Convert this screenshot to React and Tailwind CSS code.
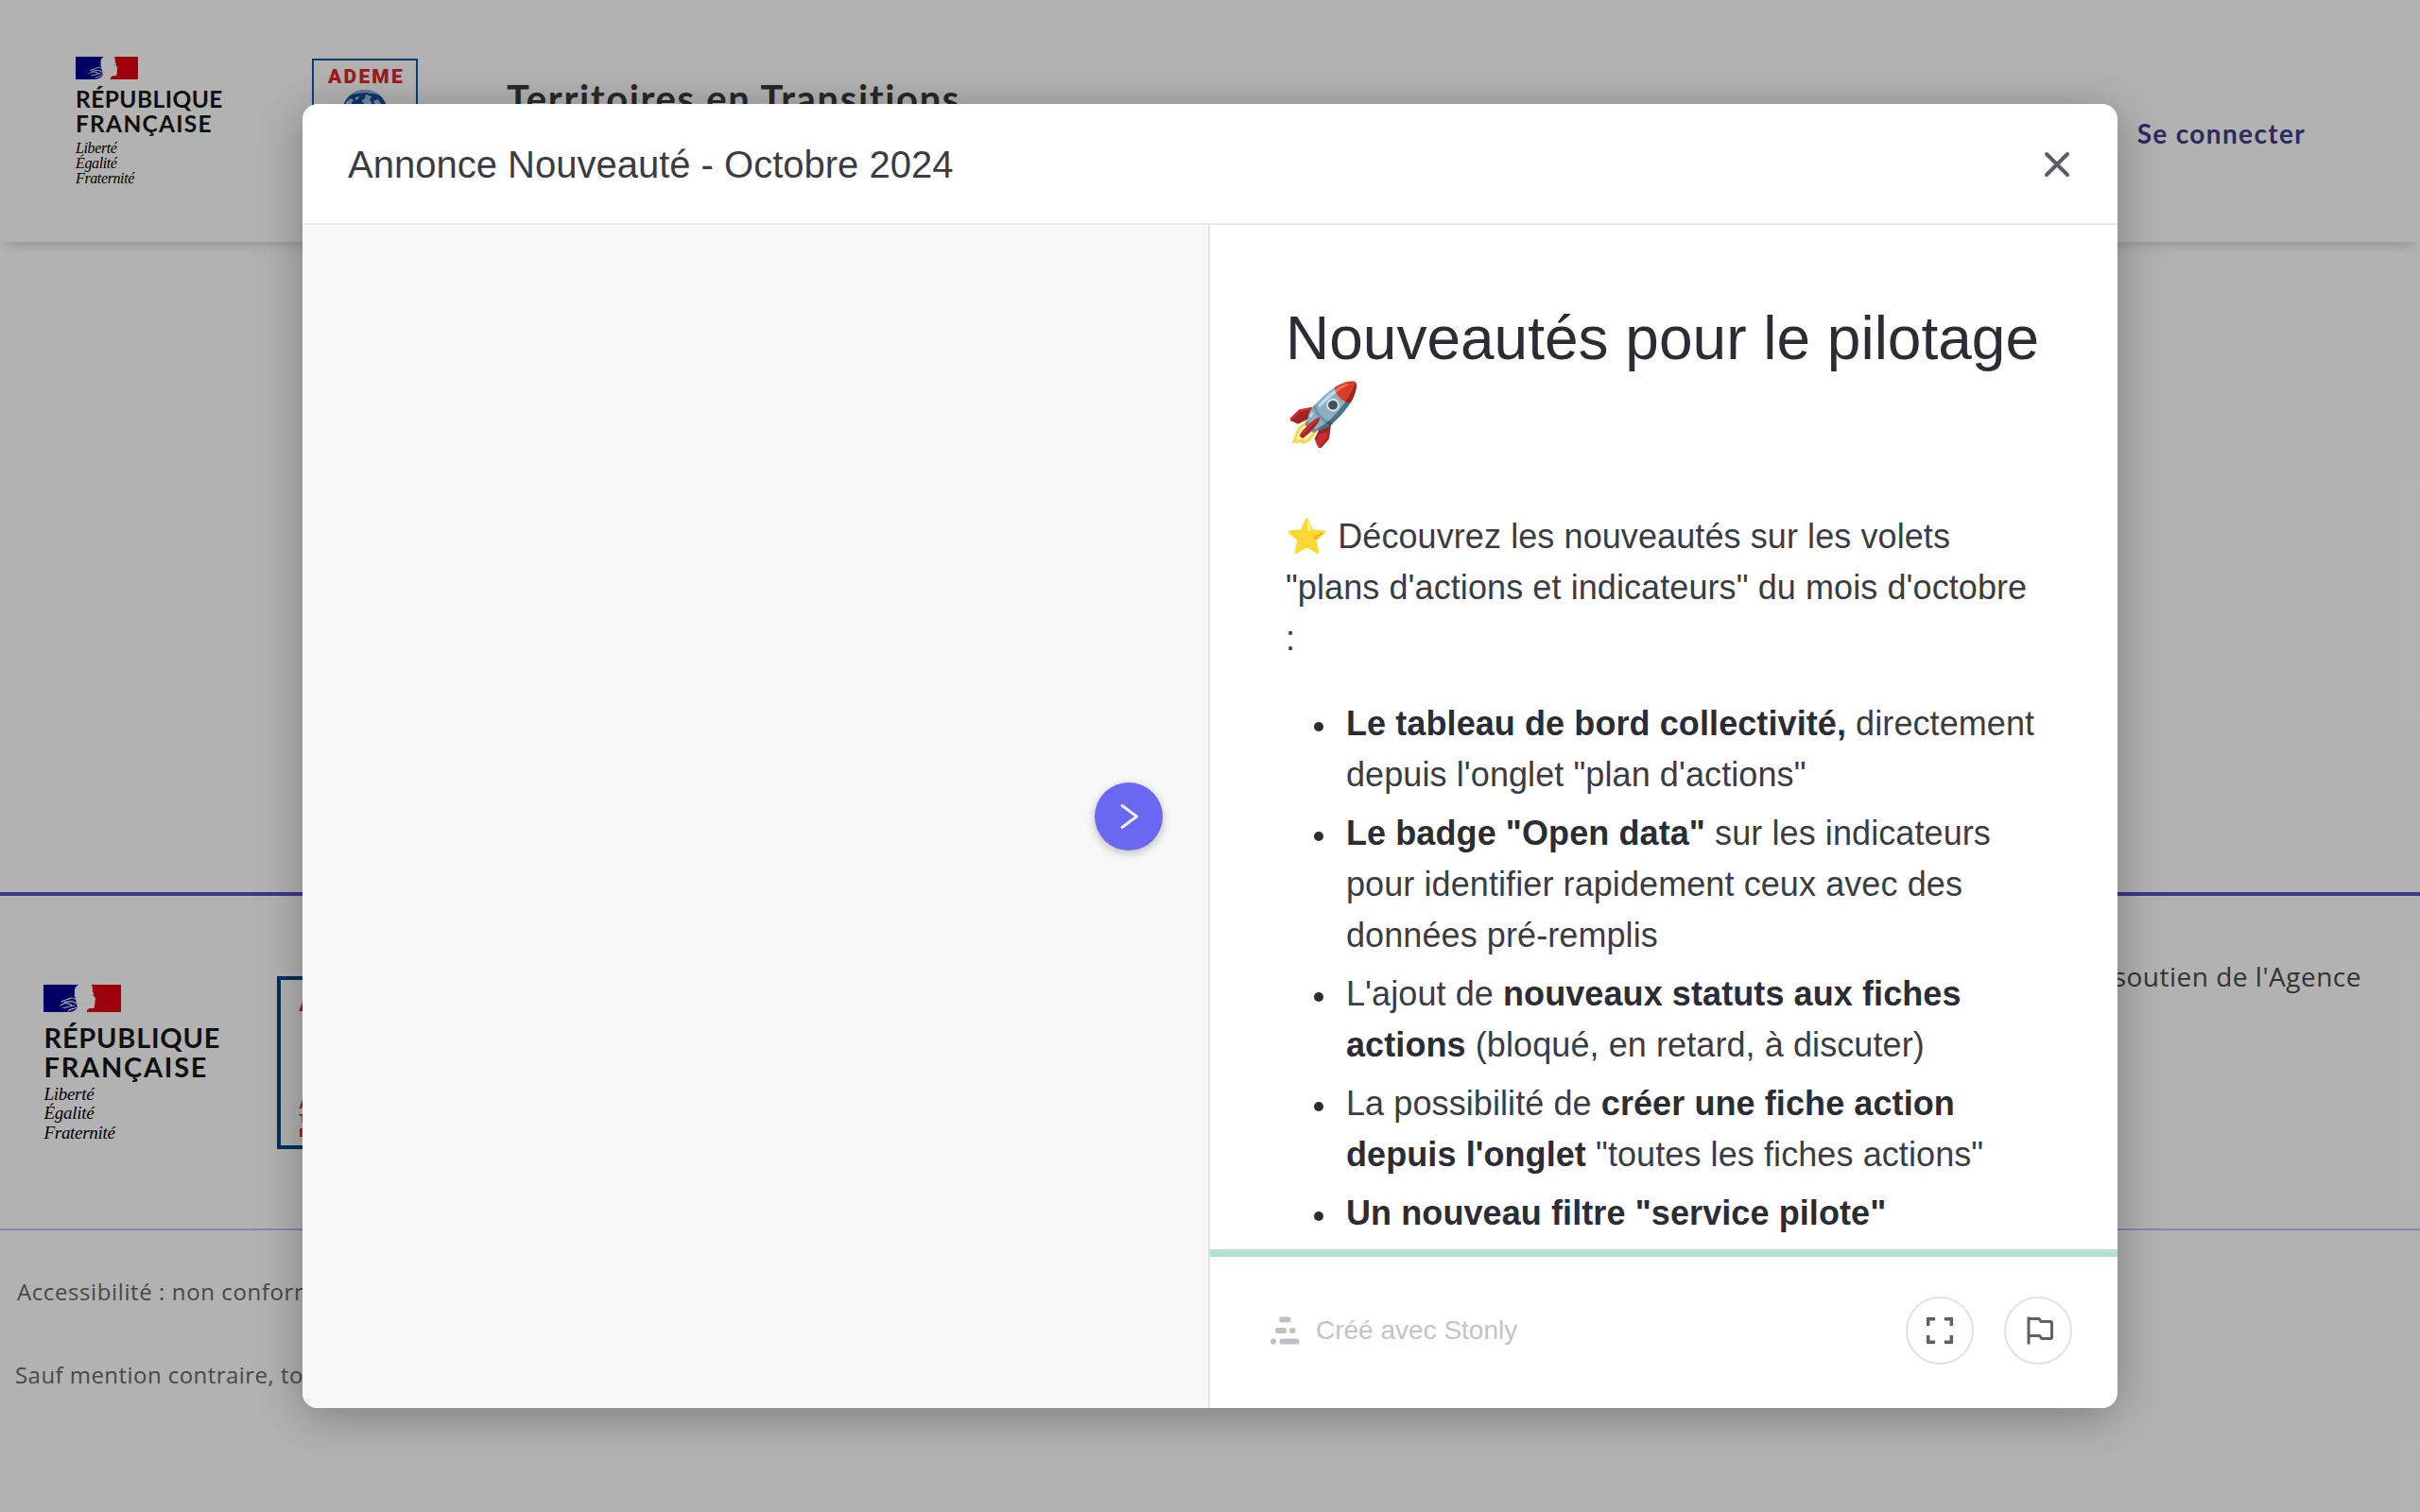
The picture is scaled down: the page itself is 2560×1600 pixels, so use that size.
import React from "react";

function Flag({ className }) {
  return (
    <svg className={className} viewBox="0 0 82 29.5" preserveAspectRatio="none" aria-hidden="true">
      <path d="M0 0H37C34 2 32.5 4 33 8C33.4 10 32 11 33.4 13C35 15.5 33.5 18 35.5 20C34.6 22 37 24 34 26.5C32 28 29 29 26 29.5H0Z" fill="#000091" />
      <path d="M50.5 0H82V29.5H46C45.5 26.5 47.5 25 50 25C53 25.2 54.5 24.6 54 22.5C53.8 21 55 20.6 54.2 19C55 17.8 54.6 17 54.2 16.2C55.8 15.6 55 14.6 53.6 12.4C52.8 11 53.6 9.6 52.4 8C51.2 5.6 53 3.4 50.5 0Z" fill="#e1000f" />
      <path d="M19 18C23 15.5 26 16 28 14.5C30 13.6 32 14 34 15.5M18 22C22 18.5 26 19.5 30 21.5M21 24.5C25 24 27 22.4 33 22M26 28C28 25.6 31 26 34.5 24.5M22 18.6L30 17.6L35 20" fill="none" stroke="#fff" strokeWidth="1.1" strokeLinecap="round" />
      <path d="M51 11.2L53 10.8" stroke="#999" strokeWidth="1" />
    </svg>
  );
}

function Globe() {
  return (
    <svg className="h-12 w-12" viewBox="0 0 48 48" aria-hidden="true">
      <circle cx="24" cy="24" r="24" fill="#0b4ea2" />
      <path d="M8 6A24 24 0 0 1 40 6C34 3.5 30 4.5 26 3C20 3 14 4 8 6Z" fill="#8fb3d9" />
      <path d="M25 5L31 7L29 11L32 14L28 16L25 21L21 20L23 14L20 12L24 9ZM4 13L9 9L12 11L8 17L4 19ZM14 8L18 7L17 10L14 11ZM33 12L38 10L41 15L36 18Z" fill="#a9c6e6" />
    </svg>
  );
}

function HeaderLogo() {
  return (
    <div className="w-[250px] shrink-0">
      <Flag className="block h-6 w-[66px]" />
      <div className="mt-[7.5px] font-[Lato] text-[24.5px] leading-[26px] font-bold text-[#161616]">
        <div className="tracking-[0.45px]">RÉPUBLIQUE</div>
        <div className="tracking-[1.25px]">FRANÇAISE</div>
      </div>
      <div className="mt-[5.3px] font-['Liberation_Serif'] text-[16px] leading-[16.3px] tracking-[-0.38px] text-black italic">
        <div>Liberté</div>
        <div>Égalité</div>
        <div>Fraternité</div>
      </div>
    </div>
  );
}

function FooterLogo() {
  return (
    <div className="mt-[93.5px] w-[247px] shrink-0">
      <Flag className="block h-[29.5px] w-[82px]" />
      <div className="mt-[10.8px] pl-px font-[Lato] text-[29px] leading-[31.3px] font-bold text-[#161616]">
        <div className="tracking-[0.75px]">RÉPUBLIQUE</div>
        <div className="tracking-[1.75px]">FRANÇAISE</div>
      </div>
      <div className="mt-[3.5px] pl-px font-['Liberation_Serif'] text-[19px] leading-[20.5px] tracking-[-0.3px] text-black italic">
        <div>Liberté</div>
        <div>Égalité</div>
        <div>Fraternité</div>
      </div>
    </div>
  );
}

function Header() {
  return (
    <header className="flex h-64 items-start bg-white pt-[60px] pr-[121px] pl-20 shadow-[0_8px_14px_-6px_rgba(0,0,0,0.2)]">
      <HeaderLogo />
      <div className="mt-0.5 flex h-[150px] w-[112px] shrink-0 flex-col items-center border-2 border-[#16589f] pt-[5px]">
        <div className="pl-[3px] font-[Roboto] text-[21px] leading-6 font-black tracking-[2.2px] text-[#e5232b]">ADEME</div>
        <div className="mt-0.5">
          <Globe />
        </div>
      </div>
      <div className="mt-[19.5px] ml-[94px] font-[Lato] text-[40px] leading-[48px] font-bold tracking-[1.65px] text-[#3a3a3a]">
        Territoires en Transitions
      </div>
      <a className="mt-[61px] ml-auto font-[Lato] text-[28px] leading-10 font-bold tracking-[1.35px] text-[#403d88]">
        Se connecter
      </a>
    </header>
  );
}

function Footer() {
  return (
    <footer className="border-t-4 border-[#5552c3] font-['Open_Sans']">
      <div className="flex h-[352px] pl-[45.5px]">
        <FooterLogo />
        <div className="mt-[84.5px] flex h-[183px] w-[146px] shrink-0 flex-col justify-between border-4 border-[#00438f] px-5 pt-2 pb-1.5 font-[Roboto] font-black text-[#e5232b]">
          <div className="text-[26px] leading-8 tracking-[2.5px]">ADEME</div>
          <div className="text-[13px] leading-[15px]">
            <div>AGENCE DE LA</div>
            <div>TRANSITION</div>
            <div>ÉCOLOGIQUE</div>
          </div>
        </div>
        <p className="mt-[60.5px] mr-[62px] ml-auto text-[28px] leading-[48px] tracking-[0.5px] text-[#4a4a4a]">
          soutien de l'Agence
        </p>
      </div>
      <div className="border-t-2 border-[#c5bef8] pt-[46.5px] text-[24px] leading-9 text-[#686868]">
        <p className="pl-[18px] tracking-[0.6px]">Accessibilité : non conforme</p>
        <p className="mt-[52px] pl-4 tracking-[0.45px]">Sauf mention contraire, tous</p>
      </div>
    </footer>
  );
}

function StonlyMark() {
  return (
    <svg className="h-[30px] w-[31px]" viewBox="0 0 31 30" fill="#bfc0c6" aria-hidden="true">
      <rect x="9.3" y="0.5" width="12" height="6" rx="2.5" />
      <rect x="5" y="12" width="12" height="6" rx="2.5" />
      <rect x="20" y="12" width="6.4" height="6" rx="2.8" />
      <rect x="0" y="23.5" width="6" height="6" rx="2.8" />
      <rect x="9.5" y="23.5" width="21" height="6" rx="2.5" />
    </svg>
  );
}

function RoundButton({ children, label }) {
  return (
    <button aria-label={label} className="flex h-[72px] w-[72px] items-center justify-center rounded-full border-2 border-[#e2e2e5] bg-white">
      {children}
    </button>
  );
}

const NEWS = [
  <><b>Le tableau de bord collectivité,</b> directement depuis l'onglet "plan d'actions"</>,
  <><b>Le badge "Open data"</b> sur les indicateurs pour identifier rapidement ceux avec des données pré-remplis</>,
  <>L'ajout de <b>nouveaux statuts aux fiches actions</b> (bloqué, en retard, à discuter)</>,
  <>La possibilité de <b>créer une fiche action depuis l'onglet</b> "toutes les fiches actions"</>,
  <><b>Un nouveau filtre "service pilote"</b></>,
];

function Modal() {
  return (
    <div className="flex h-[1380px] w-[1920px] flex-col overflow-hidden rounded-2xl bg-white font-['Liberation_Sans'] text-[#2b2c34] shadow-[0_8px_48px_rgba(0,0,0,0.3)]">
      <div className="flex h-[128px] shrink-0 items-center justify-between border-b-2 border-[#e8e8ea] pr-[52px] pl-12">
        <h2 className="mt-0.5 text-[40px] leading-[48px] text-[#3b3c43]">Annonce Nouveauté - Octobre 2024</h2>
        <svg className="mt-0.5 h-6 w-6 overflow-visible" viewBox="0 0 24 24" fill="none" stroke="#5b5c66" strokeWidth="4" strokeLinecap="round">
          <path d="M1 1L23 23M23 1L1 23" />
        </svg>
      </div>
      <div className="flex min-h-0 grow">
        <div className="flex w-[960px] items-center justify-end border-r-2 border-[#e4e4e6] bg-[#f8f8f8] pr-12">
          <button aria-label="Suivant" className="flex h-[72px] w-[72px] items-center justify-center rounded-full bg-[#6a67f3] shadow-[0_3px_10px_rgba(0,0,0,0.25)]">
            <svg className="h-7 w-7" viewBox="0 0 28 28" fill="none" stroke="#f0efff" strokeWidth="3" strokeLinecap="round" strokeLinejoin="round">
              <path d="M7 2.5L22.5 14L7 25.5" />
            </svg>
          </button>
        </div>
        <div className="flex w-[960px] flex-col">
          <div className="h-[1084px] shrink-0 overflow-hidden pt-20 pr-20 pl-20">
            <h1 className="text-[64px] leading-[80px]">Nouveautés pour le pilotage 🚀</h1>
            <p className="mt-[63px] w-[799px] text-[36px] leading-[54px] tracking-[0.09px] text-[#3b3c43]">
              ⭐ Découvrez les nouveautés sur les volets "plans d'actions et indicateurs" du mois d'octobre :
            </p>
            <ul className="mt-9 flex flex-col gap-2 text-[36px] leading-[54px] tracking-[0.09px] text-[#3b3c43]">
              {NEWS.map((item, i) => (
                <li key={i} className="flex">
                  <span className="mt-[25px] mr-6 ml-[30px] h-2.5 w-2.5 shrink-0 rounded-full bg-[#2b2c34]" />
                  <span className="[&>b]:font-bold [&>b]:text-[#2b2c34]">{item}</span>
                </li>
              ))}
            </ul>
          </div>
          <div className="h-2 shrink-0 bg-linear-to-b from-[#cbdcd7] to-[#b0e2d4] to-45%" />
          <div className="flex grow items-center pr-12 pb-1 pl-16">
            <StonlyMark />
            <span className="ml-[17px] text-[28px] leading-9 text-[#c2c3c9]">Créé avec Stonly</span>
            <div className="ml-auto flex gap-8">
              <RoundButton label="Plein écran">
                <svg className="h-7 w-7" viewBox="0 0 28 28" fill="none" stroke="#606168" strokeWidth="3.4">
                  <path d="M1.7 9V1.7H9M19 1.7H26.3V9M26.3 19V26.3H19M9 26.3H1.7V19" />
                </svg>
              </RoundButton>
              <RoundButton label="Signaler">
                <svg className="ml-1 h-[30px] w-7" viewBox="0 0 28 30" fill="none" stroke="#606168" strokeWidth="3" strokeLinejoin="round">
                  <path d="M2 0.5V29.5M2 2.5H13L15 5.5H25Q26.5 5.5 26.5 7V22Q26.5 23.5 25 23.5H16L13.5 20.5H2" />
                </svg>
              </RoundButton>
            </div>
          </div>
        </div>
      </div>
    </div>
  );
}

export default function App() {
  return (
    <div className="relative h-[1600px] w-[2560px] overflow-hidden bg-white">
      <Header />
      <main className="h-[688px]" />
      <Footer />
      <div className="absolute inset-0 flex items-center justify-center bg-black/30">
        <Modal />
      </div>
    </div>
  );
}
